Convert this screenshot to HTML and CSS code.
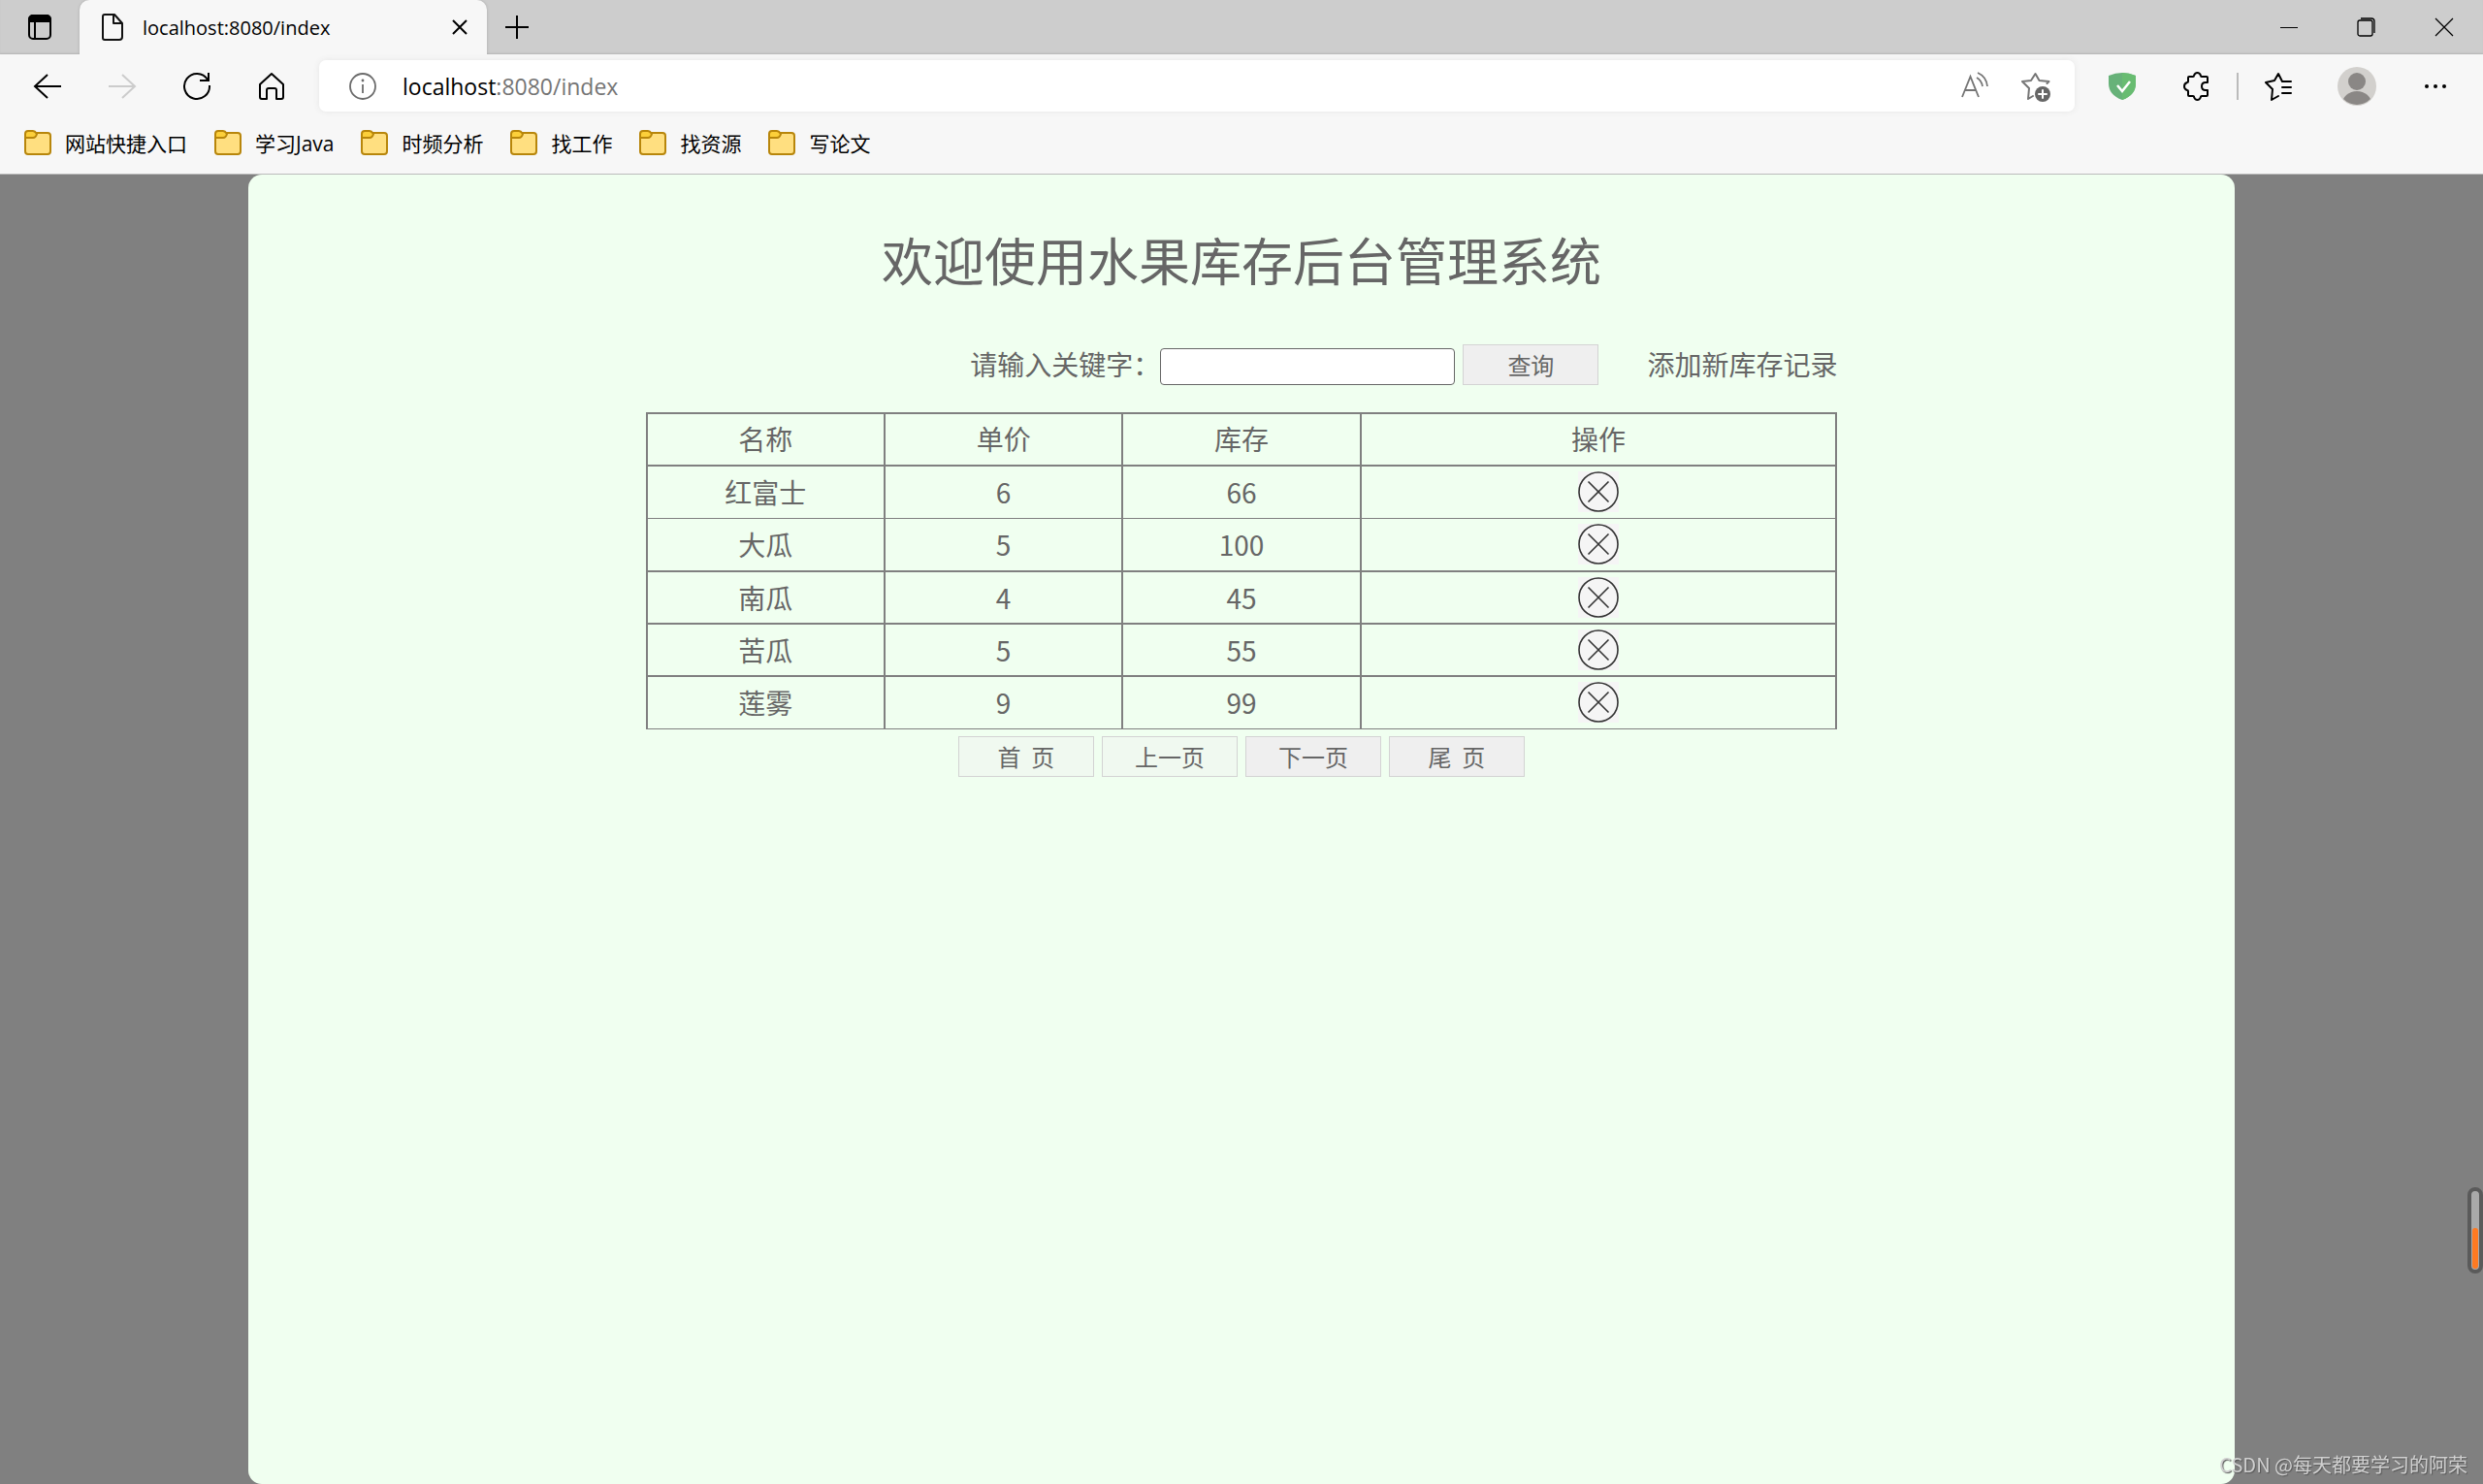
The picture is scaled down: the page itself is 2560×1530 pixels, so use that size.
FILE: index.html
```html
<!DOCTYPE html>
<html lang="zh-CN">
<head>
<meta charset="utf-8">
<title>localhost:8080/index</title>
<link rel="stylesheet" href="styles.css">
</head>
<body>
<header class="browser">
  <div class="tabstrip">
    <button class="tab-actions" aria-label="Tab actions">
      <svg width="26" height="28" viewBox="0 0 26 28" fill="none" stroke="#000" stroke-width="2"><rect x="2" y="2" width="22" height="24" rx="4"/><path d="M2 8V6a4 4 0 0 1 4-4h14a4 4 0 0 1 4 4v2z" fill="#000"/><path d="M8 8v18"/></svg>
    </button>
    <div class="tab">
      <svg width="24" height="30" viewBox="0 0 24 30" fill="none" stroke="#111" stroke-width="2" stroke-linejoin="round"><path d="M4 2h10l8 9v14a3 3 0 0 1-3 3H4a2 2 0 0 1-2-2V4a2 2 0 0 1 2-2z"/><path d="M13 2v9h8"/></svg>
      <span class="tab-title">localhost:8080/index</span>
      <button class="tab-close" aria-label="Close tab"><svg width="16" height="16" viewBox="0 0 16 16" stroke="#000" stroke-width="2"><path d="M1 1l14 14M15 1L1 15"/></svg></button>
    </div>
    <button class="new-tab" aria-label="New tab"><svg width="24" height="24" viewBox="0 0 24 24" stroke="#000" stroke-width="2"><path d="M12 0v24M0 12h24"/></svg></button>
    <div class="window-controls">
      <button aria-label="Minimize"><svg width="18" height="18" viewBox="0 0 18 18" stroke="#000"><path d="M0 9.5h18"/></svg></button>
      <button aria-label="Restore"><svg width="20" height="20" viewBox="0 0 20 20" fill="none" stroke="#000" stroke-width="1.3"><rect x="1" y="3" width="15" height="16" rx="2"/><path d="M4 1h11a3 3 0 0 1 3 3v12"/></svg></button>
      <button aria-label="Close window"><svg width="20" height="20" viewBox="0 0 20 20" stroke="#000" stroke-width="1.2"><path d="M1 1l18 18M19 1L1 19"/></svg></button>
    </div>
  </div>

  <div class="toolbar">
    <button aria-label="Back"><svg width="30" height="28" viewBox="0 0 30 28" fill="none" stroke="#000" stroke-width="2"><path d="M29 14H2M15 2L2 14l13 12"/></svg></button>
    <button aria-label="Forward" disabled><svg width="30" height="28" viewBox="0 0 30 28" fill="none" stroke="#ccc" stroke-width="2"><path d="M1 14h27M15 2l13 12-13 12"/></svg></button>
    <button aria-label="Refresh"><svg width="30" height="30" viewBox="0 0 30 30" fill="none" stroke="#000" stroke-width="2"><path d="M26 8A13 13 0 1 0 28 14M27 1v8h-9"/></svg></button>
    <button aria-label="Home"><svg width="28" height="30" viewBox="0 0 28 30" fill="none" stroke="#000" stroke-width="2" stroke-linejoin="round"><path d="M14 2L2 13v13a2 2 0 0 0 2 2h5V19a2 2 0 0 1 2-2h6a2 2 0 0 1 2 2v9h5a2 2 0 0 0 2-2V13z"/></svg></button>
    <div class="address">
      <svg width="30" height="30" viewBox="0 0 30 30" fill="none" stroke="#6b6b6b" stroke-width="1.800"><circle cx="15" cy="15" r="13"/><path d="M15 13v9"/><circle cx="15" cy="9" r="1.400" fill="#6b6b6b" stroke="none"/></svg>
      <div class="url" role="textbox" aria-label="Address" contenteditable="true" spellcheck="false">localhost<span class="url-rest">:8080/index</span></div>
      <button aria-label="Read aloud"><svg width="28" height="30" viewBox="0 0 28 30" fill="none" stroke="#757575" stroke-width="1.800"><path d="M1 26L9.500 5 18 26M4 19h11M16 6q5 3 6 9M17 1q9 4 10 14"/></svg></button>
      <button aria-label="Add to favorites"><svg width="30" height="32" viewBox="0 0 30 32" fill="none" stroke="#757575" stroke-width="2" stroke-linejoin="round" stroke-linecap="round"><path d="M12 26l-5 3 1-11-7-7 9-1L14.500 3l4 7 10 1-2 2"/><circle cx="22" cy="24" r="8" fill="#666" stroke="none"/><path d="M22 20v8M18 24h8" stroke="#fff"/></svg></button>
    </div>
    <button aria-label="Protection"><svg width="28" height="30" viewBox="0 0 28 30"><path d="M14 1q7 0 14 3v8q0 12-14 17Q0 24 0 12V4q7-3 14-3z" fill="#67b279"/><path d="M14 1q7 0 14 3v8q0 12-14 17z" fill="#68bc71"/><path d="M9 14l5 6 8-10" fill="none" stroke="#fff" stroke-width="2.500"/></svg></button>
    <button aria-label="Extensions"><svg width="28" height="30" viewBox="0 0 28 30" fill="none" stroke="#000" stroke-width="2" stroke-linejoin="round"><path d="M6 5h4q1 0 1-1 1-3 3.500-3T18 4q0 1 1 1h5q1 0 1 1v5h-2q-4 0-4 4t4 4h2v5q0 1-1 1h-5q-1 0-1 1-1 3-3.500 3T11 26q0-1-1-1H6q-1 0-1-1v-4q0-1-1-1-3-1-3-4t3-4q1 0 1-1V6q0-1 1-1z"/></svg></button>
    <div class="divider"></div>
    <button aria-label="Favorites"><svg width="28" height="30" viewBox="0 0 28 30" fill="none" stroke="#000" stroke-width="2" stroke-linejoin="round" stroke-linecap="round"><path d="M14 25l-7 4 1-11-7-7 9-2 4-7 4 8h9M18 16h9M18 22h9"/></svg></button>
    <button class="profile" aria-label="Profile"><svg width="40" height="40" viewBox="0 0 40 40"><defs><clipPath id="disc"><circle cx="20" cy="20" r="19"/></clipPath></defs><circle cx="20" cy="20" r="20" fill="#d2d0cd"/><g fill="#8a8785" clip-path="url(#disc)"><circle cx="20" cy="15" r="9"/><ellipse cx="20" cy="38" rx="15" ry="13"/></g></svg></button>
    <button aria-label="Settings and more"><svg width="24" height="6" viewBox="0 0 24 6"><circle cx="3" cy="3" r="2"/><circle cx="12" cy="3" r="2"/><circle cx="21" cy="3" r="2"/></svg></button>
  </div>

  <svg class="sprite" aria-hidden="true"><symbol id="folder" viewBox="0 0 28 26"><rect x="1" y="3" width="26" height="22" rx="3" fill="#ffdf80" stroke="#b8860b" stroke-width="2"/><path d="M1 8V4a3 3 0 0 1 3-3h5q2 0 4 3-1 4-4 4z" fill="#fccf3a" stroke="#b8860b" stroke-width="2"/></symbol></svg>
  <nav class="bookmarks">
    <a href="#"><svg class="folder"><use href="#folder"/></svg>网站快捷入口</a>
    <a href="#"><svg class="folder"><use href="#folder"/></svg>学习Java</a>
    <a href="#"><svg class="folder"><use href="#folder"/></svg>时频分析</a>
    <a href="#"><svg class="folder"><use href="#folder"/></svg>找工作</a>
    <a href="#"><svg class="folder"><use href="#folder"/></svg>找资源</a>
    <a href="#"><svg class="folder"><use href="#folder"/></svg>写论文</a>
  </nav>
</header>

<main class="page">
  <svg class="sprite" aria-hidden="true"><symbol id="remove" viewBox="0 0 42 42"><path d="M0 0h42v42H0z" fill="#f5f5f5"/><g fill="none" stroke="#333" stroke-width="1.600"><circle cx="21" cy="21" r="20"/><path d="M10.500 10.500l21 21M31.500 10.500l-21 21"/></g></symbol></svg>
  <section class="panel">
    <h1>欢迎使用水果库存后台管理系统</h1>
    <div class="content">
      <form class="search">
        <label for="keyword">请输入关键字：</label>
        <input id="keyword" type="text" name="keyword">
        <button class="btn" type="button">查询</button>
        <a class="add" href="#">添加新库存记录</a>
      </form>
      <table class="stock">
        <colgroup><col class="col"><col class="col"><col class="col"><col></colgroup>
        <thead><tr><th>名称</th><th>单价</th><th>库存</th><th>操作</th></tr></thead>
        <tbody>
          <tr><td>红富士</td><td>6</td><td>66</td><td><button class="remove" aria-label="删除"><svg><use href="#remove"/></svg></button></td></tr>
          <tr><td>大瓜</td><td>5</td><td>100</td><td><button class="remove" aria-label="删除"><svg><use href="#remove"/></svg></button></td></tr>
          <tr><td>南瓜</td><td>4</td><td>45</td><td><button class="remove" aria-label="删除"><svg><use href="#remove"/></svg></button></td></tr>
          <tr><td>苦瓜</td><td>5</td><td>55</td><td><button class="remove" aria-label="删除"><svg><use href="#remove"/></svg></button></td></tr>
          <tr><td>莲雾</td><td>9</td><td>99</td><td><button class="remove" aria-label="删除"><svg><use href="#remove"/></svg></button></td></tr>
        </tbody>
      </table>
      <div class="pager">
        <button class="btn" disabled>首&nbsp;&nbsp;页</button>
        <button class="btn" disabled>上一页</button>
        <button class="btn">下一页</button>
        <button class="btn">尾&nbsp;&nbsp;页</button>
      </div>
    </div>
  </section>
</main>
<div class="meter"><div class="meter-fill"></div></div>
<div class="watermark">CSDN @每天都要学习的阿荣</div>
</body>
</html>
```
FILE: styles.css
```css
* { box-sizing: border-box; }

body {
  margin: 0;
  min-height: 100vh;
  display: flex;
  flex-direction: column;
  background: #808080;
  font-family: "Noto Sans CJK SC", sans-serif;
}

button {
  padding: 0;
  border: 0;
  background: none;
  font-family: inherit;
}

svg { display: block; flex: none; }
a { color: inherit; text-decoration: none; }
.sprite { position: absolute; width: 0; height: 0; }

/* Browser frame */
.browser {
  background: #f7f7f7;
  border-bottom: 1px solid #bbb;
  font-family: "Open Sans", "Noto Sans CJK SC", sans-serif;
  color: #000;
}

.browser button { display: flex; align-items: center; justify-content: center; }

.tabstrip {
  display: flex;
  height: 56px;
  background: #cdcdcd;
  box-shadow: inset 0 -2px 2px -1px #b4b4b4;
}

.tab-actions { width: 82px; }

.tab {
  display: flex;
  align-items: center;
  gap: 19px;
  width: 420px;
  padding: 0 20px 0 22px;
  border-radius: 10px 10px 0 0;
  background: #f7f7f7;
  box-shadow: 0 0 3px #aaa;
  clip-path: inset(0 -4px 0 -4px);
}

.tab-title { flex: 1; font-size: 20px; }
.new-tab { width: 62px; }
.window-controls { display: flex; margin-left: auto; }
.window-controls button { width: 80px; }

.toolbar {
  display: flex;
  align-items: center;
  gap: 21px;
  padding: 6px 21px 8px 21px;
}

.toolbar > button { width: 56px; height: 53px; }

.address {
  flex: 1;
  display: flex;
  align-items: center;
  height: 53px;
  padding: 0 25px 0 30px;
  border-radius: 7px;
  background: #fff;
  box-shadow: 0 0 6px #e6e6e6;
}

.address button { margin-left: 34px; }
.url { flex: 1; margin-left: 26px; font-size: 23px; outline: 0; }
.url-rest { color: #757575; }
.divider { width: 2px; height: 28px; margin: 0 -8px; background: #bbb; }
.profile { margin: 0 4px; }

.bookmarks {
  display: flex;
  gap: 28px;
  height: 56px;
  padding: 0 25px 8px;
  font-size: 21px;
}

.bookmarks a { display: flex; align-items: center; gap: 14px; }
.folder { width: 28px; height: 26px; }

/* Stock page */
.page { flex: 1; display: flex; justify-content: center; color: #666; }

.panel {
  width: 80%;
  padding-top: 57px;
  border-radius: 14px;
  background: #f0fff0;
}

h1 {
  margin: 0 0 58px;
  font-size: 53px;
  font-weight: 400;
  line-height: 60px;
  text-align: center;
}

.content { width: 60%; margin: 0 auto; font-size: 28px; }

.search {
  display: flex;
  align-items: center;
  justify-content: flex-end;
  margin-bottom: 28px;
  line-height: 40px;
}

.search label,
.search .add { align-self: flex-start; }

.search input {
  align-self: flex-end;
  width: 304px;
  height: 38px;
  margin-right: 8px;
  border: 1px solid #666;
  border-radius: 4px;
  background: #fff;
  font-size: 24px;
}

.add { margin-left: 50px; }

.btn {
  width: 140px;
  height: 42px;
  border: 1px solid #d3d3d3;
  background: #efefef;
  color: #666;
  font-size: 24px;
  line-height: 40px;
}

.btn:disabled { background: #f0f9f0; }

.stock {
  width: 100%;
  table-layout: fixed;
  border-collapse: collapse;
  text-align: center;
}

.col { width: 20%; }

.stock th,
.stock td {
  height: 54px;
  padding: 0;
  border: 2px solid #808080;
  font-weight: 400;
  line-height: 40px;
}

.stock th { padding-bottom: 2px; }
.stock tbody tr:first-child td { border-bottom-width: 1px; }
.stock tbody tr:nth-child(2) td { height: 55px; border-top-width: 1px; }
.stock tbody tr:last-child td { border-bottom-width: 1px; }
.remove { display: block; margin: 0 auto; }
.remove svg { width: 42px; height: 42px; }

.pager { display: flex; justify-content: center; gap: 8px; margin-top: 7px; }

/* Overlays */
.meter {
  position: fixed;
  right: 0;
  bottom: 217px;
  display: flex;
  align-items: flex-end;
  width: 16px;
  height: 89px;
  padding: 1px;
  border: 4px solid #5a5a5a;
  border-radius: 8px;
  background: #a9a9a9;
}

.meter-fill { width: 100%; height: 42px; border-radius: 3px; background: #ff7a22; }

.watermark {
  position: fixed;
  right: 16px;
  bottom: 5px;
  color: #d0d0d0;
  font-size: 20px;
  line-height: 30px;
  text-shadow: 1px 1px 1px #555;
}
```
